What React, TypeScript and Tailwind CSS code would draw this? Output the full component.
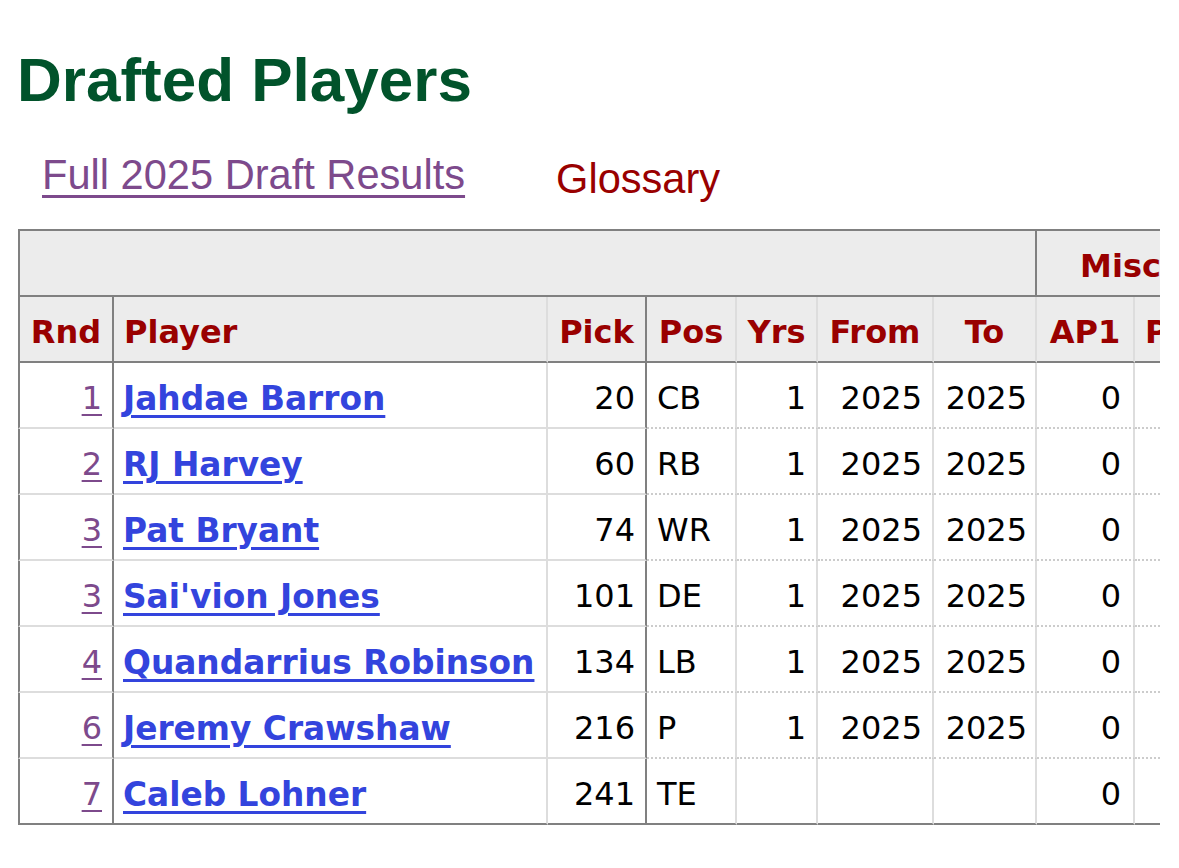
import React from "react";

type Row = {
  rnd: string;
  name: string;
  pick: string;
  pos: string;
  yrs: string;
  from: string;
  to: string;
  ap1: string;
};

const rows: Row[] = [
  { rnd: "1", name: "Jahdae Barron", pick: "20", pos: "CB", yrs: "1", from: "2025", to: "2025", ap1: "0" },
  { rnd: "2", name: "RJ Harvey", pick: "60", pos: "RB", yrs: "1", from: "2025", to: "2025", ap1: "0" },
  { rnd: "3", name: "Pat Bryant", pick: "74", pos: "WR", yrs: "1", from: "2025", to: "2025", ap1: "0" },
  { rnd: "3", name: "Sai'vion Jones", pick: "101", pos: "DE", yrs: "1", from: "2025", to: "2025", ap1: "0" },
  { rnd: "4", name: "Quandarrius Robinson", pick: "134", pos: "LB", yrs: "1", from: "2025", to: "2025", ap1: "0" },
  { rnd: "6", name: "Jeremy Crawshaw", pick: "216", pos: "P", yrs: "1", from: "2025", to: "2025", ap1: "0" },
  { rnd: "7", name: "Caleb Lohner", pick: "241", pos: "TE", yrs: "", from: "", to: "", ap1: "0" },
];

const sans = { fontFamily: '"Liberation Sans", Arial, sans-serif' };
const verd = { fontFamily: '"DejaVu Sans", Verdana, sans-serif' };

export default function App() {
  return (
    <div className="w-[1179px] h-[868px] overflow-hidden bg-white">
      <h1
        className="ml-[17px] mt-[50px] text-[62px] leading-[60px] font-bold text-[#01532b]"
        style={sans}
      >
        Drafted Players
      </h1>
      <div className="flex items-start ml-[42px] mt-[45px]" style={sans}>
        <a className="text-[41.6px] leading-[40px] text-[#7d4a8c] underline decoration-[3px] underline-offset-[6px]">
          Full 2025 Draft Results
        </a>
        <span className="ml-[91px] mt-[4px] text-[41.6px] leading-[40px] text-[#990000]">Glossary</span>
      </div>
      <div className="ml-[18px] mt-[30px] w-[1142px] overflow-hidden">
        <table
          className="border-separate border-spacing-0 table-fixed w-[1217px] text-[32px] text-black"
          style={verd}
        >
          <colgroup>
            <col className="w-[96px]" />
            <col className="w-[434px]" />
            <col className="w-[99px]" />
            <col className="w-[90px]" />
            <col className="w-[81px]" />
            <col className="w-[116px]" />
            <col className="w-[103px]" />
            <col className="w-[98px]" />
            <col className="w-[100px]" />
          </colgroup>
          <thead>
            <tr className="h-[68px]">
              <th
                colSpan={7}
                className="bg-[#ececec] border-t-2 border-l-2 border-b-2 border-r-2 border-[#808080]"
              ></th>
              <th
                colSpan={2}
                className="bg-[#ececec] border-t-2 border-b-2 border-[#808080] text-left pl-[43px] pt-[6px] font-bold text-[#990000] whitespace-nowrap"
              >
                Misc
              </th>
            </tr>
            <tr className="h-[66px] font-bold text-[#990000]">
              <th className="bg-[#ececec] border-l-2 border-b-2 border-r-2 border-[#808080] text-center px-[6px] pt-[5px]">Rnd</th>
              <th className="bg-[#ececec] border-b-2 border-b-[#808080] border-r-2 border-r-[#dddddd] text-left px-[10px] pt-[5px]">Player</th>
              <th className="bg-[#ececec] border-b-2 border-r-2 border-[#808080] text-center pt-[5px]">Pick</th>
              <th className="bg-[#ececec] border-b-2 border-b-[#808080] border-r-2 border-r-[#dddddd] text-center pt-[5px]">Pos</th>
              <th className="bg-[#ececec] border-b-2 border-b-[#808080] border-r-2 border-r-[#dddddd] text-center pt-[5px]">Yrs</th>
              <th className="bg-[#ececec] border-b-2 border-b-[#808080] border-r-2 border-r-[#dddddd] text-center pt-[5px]">From</th>
              <th className="bg-[#ececec] border-b-2 border-b-[#808080] border-r-2 border-r-[#dddddd] text-center pt-[5px]">To</th>
              <th className="bg-[#ececec] border-b-2 border-b-[#808080] border-r-2 border-r-[#dddddd] text-center pt-[5px]">AP1</th>
              <th className="bg-[#ececec] border-b-2 border-b-[#808080] border-r-2 border-r-[#dddddd] text-left px-[10px] pt-[5px] whitespace-nowrap">PB</th>
            </tr>
          </thead>
          <tbody>
            {rows.map((r, i) => {
              const last = i === rows.length - 1;
              const solidB = last ? "border-b-2 border-b-[#808080]" : "border-b-2 border-b-[#dddddd]";
              const dotB = last
                ? "border-b-2 border-b-[#808080]"
                : "border-b-2 [border-bottom-style:dotted] border-b-[#cccccc]";
              return (
                <tr key={i} className="h-[66px]">
                  <td className={`border-l-2 border-l-[#808080] border-r-2 border-r-[#808080] ${solidB} text-right px-[10px] pt-[5px]`}>
                    <a className="text-[#7d4a8c] underline decoration-2 underline-offset-[5px]">{r.rnd}</a>
                  </td>
                  <td className={`border-r-2 border-r-[#dddddd] ${solidB} text-left px-[9px] pt-[9px] whitespace-nowrap`}>
                    <a className="font-bold text-[32.8px] text-[#3344dd] underline decoration-[3px] underline-offset-[5px]">{r.name}</a>
                  </td>
                  <td className={`border-r-2 border-r-[#808080] ${solidB} text-right px-[10px] pt-[5px]`}>{r.pick}</td>
                  <td className={`border-r-2 border-r-[#dddddd] ${dotB} text-left px-[10px] pt-[5px]`}>{r.pos}</td>
                  <td className={`border-r-2 border-r-[#dddddd] ${dotB} text-right px-[10px] pt-[5px]`}>{r.yrs}</td>
                  <td className={`border-r-2 border-r-[#dddddd] ${dotB} text-right px-[10px] pt-[5px]`}>{r.from}</td>
                  <td className={`border-r-2 border-r-[#dddddd] ${dotB} text-right px-[8px] pt-[5px]`}>{r.to}</td>
                  <td className={`border-r-2 border-r-[#dddddd] ${dotB} text-right px-[12px] pt-[5px]`}>{r.ap1}</td>
                  <td className={`border-r-2 border-r-[#dddddd] ${dotB} text-right px-[10px] pt-[5px]`}></td>
                </tr>
              );
            })}
          </tbody>
        </table>
      </div>
    </div>
  );
}
